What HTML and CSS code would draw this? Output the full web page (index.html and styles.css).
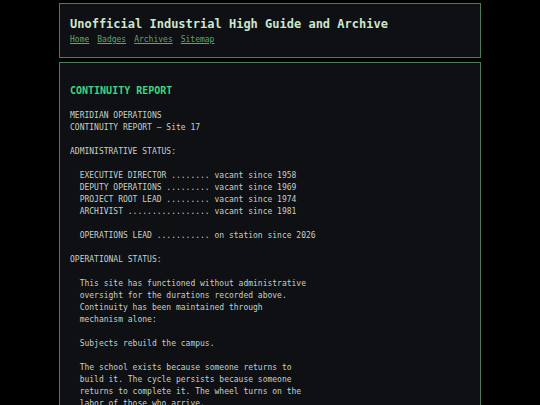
FILE: index.html
```
<!DOCTYPE html>
<html lang="en">
<head>
    <meta charset="UTF-8">
    <meta name="viewport" content="width=device-width, initial-scale=1.0">
    <title>Unofficial Industrial High Guide and Archive</title>
    <link rel="stylesheet" href="styles.css">
</head>
<body>
    <header class="site-header">
        <h1 class="site-title">Unofficial Industrial High Guide and Archive</h1>
        <nav class="site-nav">
            <a href="#">Home</a>
            <a href="#">Badges</a>
            <a href="#">Archives</a>
            <a href="#">Sitemap</a>
        </nav>
    </header>

    <main class="panel">
        <h2 class="report-title">CONTINUITY REPORT</h2>
<pre class="report">MERIDIAN OPERATIONS
CONTINUITY REPORT — Site 17

ADMINISTRATIVE STATUS:

  EXECUTIVE DIRECTOR ........ vacant since 1958
  DEPUTY OPERATIONS ......... vacant since 1969
  PROJECT ROOT LEAD ......... vacant since 1974
  ARCHIVIST ................. vacant since 1981

  OPERATIONS LEAD ........... on station since 2026

OPERATIONAL STATUS:

  This site has functioned without administrative
  oversight for the durations recorded above.
  Continuity has been maintained through
  mechanism alone:

  Subjects rebuild the campus.

  The school exists because someone returns to
  build it. The cycle persists because someone
  returns to complete it. The wheel turns on the
  labor of those who arrive.
</pre>
    </main>
</body>
</html>
```

FILE: styles.css
```
body {
    margin: 0;
    padding: 3px 0 0;
    background: #000;
    color: #c3d0c6;
    font-family: "DejaVu Sans Mono", "Liberation Mono", monospace;
    font-size: 8px;
    line-height: 12px;
}

.site-header,
.panel {
    box-sizing: border-box;
    width: 422px;
    margin: 0 auto;
    padding: 10px;
    background: #0f1013;
    border: 1px solid #4b7a5c;
}

.site-header {
    padding-top: 11px;
    padding-bottom: 11px;
}

.site-title {
    margin: 0;
    font-size: 12px;
    line-height: 19px;
    font-weight: bold;
    color: #cde6cd;
}

.site-nav {
    display: flex;
    gap: 8px;
}

.site-nav a {
    color: #56a96c;
    text-decoration: underline;
}

.panel {
    margin-top: 4px;
}

.report-title {
    margin: 12px 0 13px;
    font-size: 10px;
    line-height: 12px;
    font-weight: bold;
    color: #41d47e;
}

.report {
    margin: 0;
    font-family: inherit;
    font-size: 8px;
    line-height: 12px;
    color: #c3d0c6;
}
```
